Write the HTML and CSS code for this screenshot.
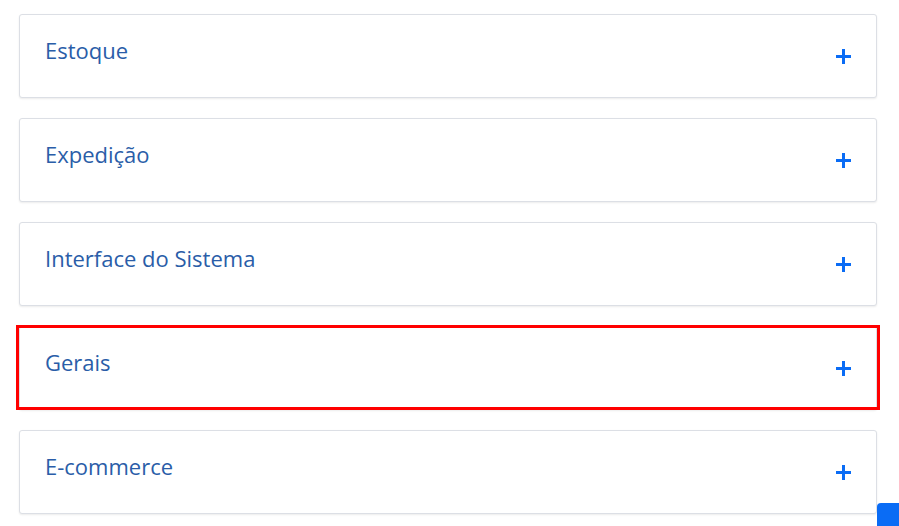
FILE: index.html
```html
<!DOCTYPE html>
<html lang="pt-BR">
<head>
<meta charset="utf-8">
<link rel="stylesheet" href="styles.css">
</head>
<body>
<div class="list">
  <div class="card"><span class="title">Estoque</span><span class="plus"></span></div>
  <div class="card"><span class="title">Expedição</span><span class="plus"></span></div>
  <div class="card"><span class="title">Interface do Sistema</span><span class="plus"></span></div>
  <div class="card highlight"><span class="title">Gerais</span><span class="plus"></span></div>
  <div class="card"><span class="title">E-commerce</span><span class="plus"></span></div>
</div>
<div class="chat"></div>
</body>
</html>
```
FILE: styles.css
```css
html, body { margin: 0; padding: 0; background: #fff; overflow: hidden; height: 100%; }
body { font-family: "Open Sans", "Noto Sans", sans-serif; }
.list {
  display: flex;
  flex-direction: column;
  gap: 20px;
  padding: 14px 22px 0 19px;
}
.card {
  box-sizing: border-box;
  height: 84px;
  border: 1px solid #dcdfe5;
  border-radius: 3px;
  box-shadow: 0 1px 2px rgba(0,0,0,0.08);
  display: flex;
  justify-content: space-between;
  padding: 0 25px 0 25px;
  position: relative;
  background: #fff;
}
.title {
  color: #2a5da8;
  font-size: 22px;
  line-height: 28px;
  margin-top: 21px;
}
.plus {
  position: relative;
  width: 15px;
  height: 15px;
  margin-top: 34px;
}
.plus::before, .plus::after {
  content: "";
  position: absolute;
  background: #0a6cf5;
}
.plus::before { left: 0; right: 0; top: 6px; height: 3px; }
.plus::after { top: 0; bottom: 0; left: 6px; width: 3px; }
.highlight::after {
  content: "";
  position: absolute;
  left: -4px;
  right: -4px;
  top: -2px;
  bottom: -1px;
  border: 3px solid #ff0000;
  pointer-events: none;
}
.chat {
  position: fixed;
  left: 877px;
  top: 503px;
  width: 40px;
  height: 40px;
  background: #0a6cf5;
  border-radius: 4px;
}
```
